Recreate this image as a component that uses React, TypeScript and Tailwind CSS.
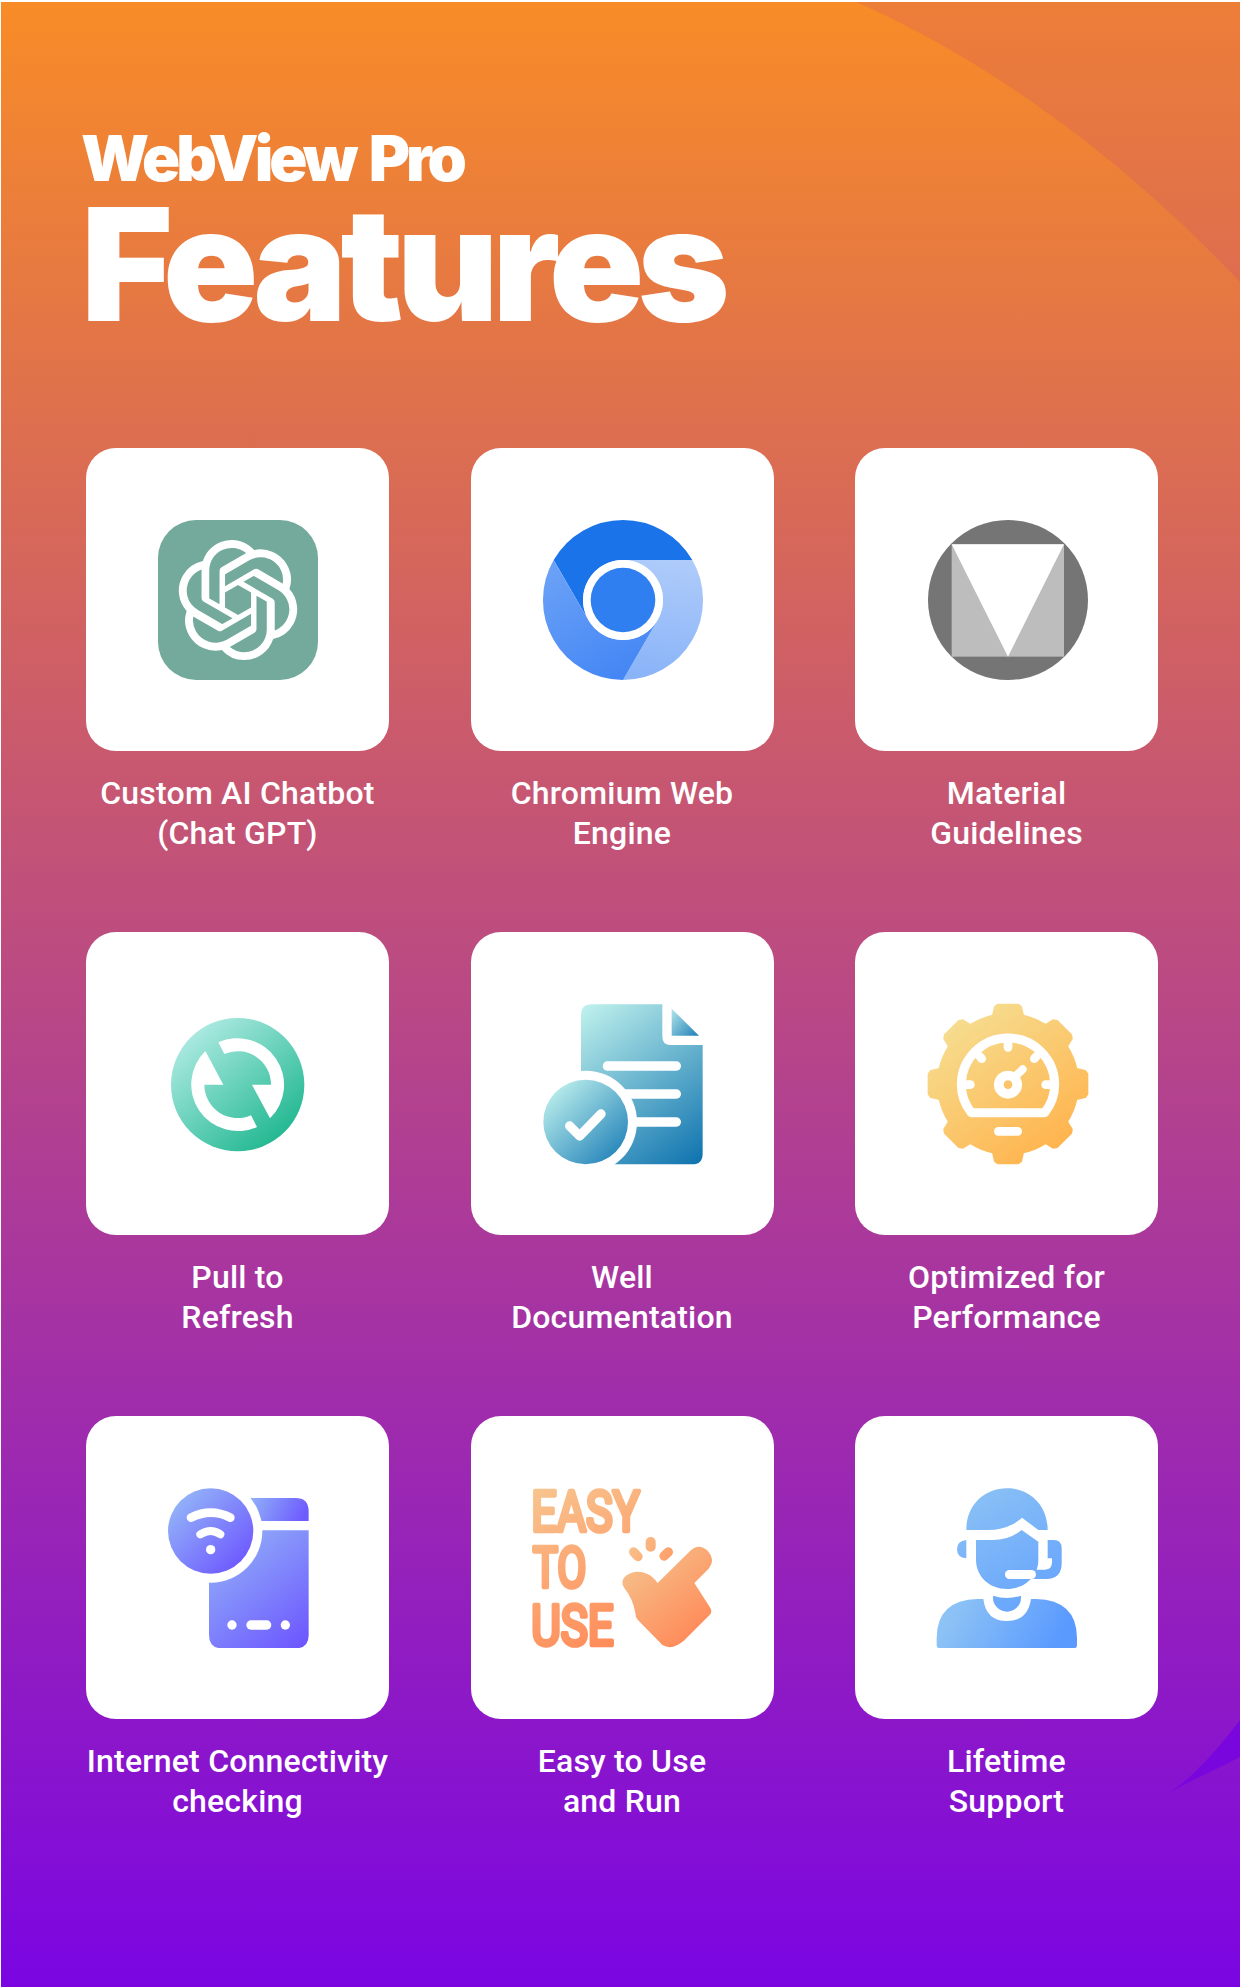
import { ReactNode } from "react";
import { SiOpenai } from "react-icons/si";

function Grad({ id, from, to, x1, y1, x2, y2 }: { id: string; from: string; to: string; x1: number; y1: number; x2: number; y2: number }) {
  return (
    <linearGradient id={id} gradientUnits="userSpaceOnUse" x1={x1} y1={y1} x2={x2} y2={y2}>
      <stop offset="0" stopColor={from} />
      <stop offset="1" stopColor={to} />
    </linearGradient>
  );
}

function ChatGptIcon() {
  return (
    <div className="flex h-[160px] w-[160px] items-center justify-center rounded-[38px] bg-[#74aa9c]">
      <SiOpenai className="h-[120px] w-[120px] text-white" />
    </div>
  );
}

function ChromiumIcon() {
  return (
    <svg className="overflow-visible" width="160" height="160" viewBox="231 90 480 480">
      <defs>
        <Grad id="cr-left" from="#6aa1f7" to="#4285f4" x1={300} y1={220} x2={500} y2={560} />
        <Grad id="cr-right" from="#aecbfa" to="#8ab4f8" x1={600} y1={210} x2={560} y2={560} />
      </defs>
      <path d="M266 210A240 240 0 0 1 682 210H474A120 120 0 0 0 370 390Z" fill="#1a73e8" />
      <path d="M682 210A240 240 0 0 1 474 570L578 390A120 120 0 0 0 474 210Z" fill="url(#cr-right)" />
      <path d="M474 570A240 240 0 0 1 266 210L370 390A120 120 0 0 0 578 390Z" fill="url(#cr-left)" />
      <circle cx="474" cy="330" r="120" fill="#fff" />
      <circle cx="474" cy="330" r="97" fill="#307ff0" />
    </svg>
  );
}

function MaterialIcon() {
  return (
    <svg className="overflow-visible" width="160" height="160" viewBox="80 90 480 480">
      <circle cx="323" cy="330" r="240" fill="#757575" />
      <rect x="154" y="163" width="337" height="337" fill="#bdbdbd" />
      <path d="M154 163H491L323 500Z" fill="#fff" />
    </svg>
  );
}

function RefreshIcon() {
  return (
    <svg width="160" height="160" viewBox="21 42 480 480">
      <defs>
        <Grad id="rf" from="#aeeae3" to="#1fb78f" x1={120} y1={120} x2={400} y2={450} />
      </defs>
      <circle cx="260" cy="284" r="200" fill="url(#rf)" />
      <path d="M202 157A140 140 0 0 1 357 385L303 284H360A100 100 0 0 0 220 192Z" fill="#fff" />
      <path d="M318 411A140 140 0 0 1 163 183L217 284H160A100 100 0 0 0 300 376Z" fill="#fff" />
    </svg>
  );
}

function DocIcon() {
  return (
    <svg className="overflow-visible" width="160" height="160" viewBox="63 42 480 480">
      <defs>
        <Grad id="doc" from="#bdf0ec" to="#0f73af" x1={190} y1={50} x2={540} y2={520} />
        <Grad id="doc-fold" from="#a9dfe6" to="#1f80b8" x1={450} y1={70} x2={530} y2={140} />
        <Grad id="doc-badge" from="#bdf0ec" to="#1f80b8" x1={90} y1={290} x2={300} y2={510} />
      </defs>
      <path d="M212 43H424V140Q424 165 449 165H545V491Q545 523 513 523H212Q180 523 180 491V75Q180 43 212 43Z" fill="url(#doc)" />
      <path d="M452 56L534 137H452Z" fill="url(#doc-fold)" />
      <g stroke="#fff" strokeWidth="28" strokeLinecap="round">
        <path d="M259 228H466" />
        <path d="M290 312H466" />
        <path d="M300 396H466" />
      </g>
      <circle cx="194" cy="396" r="154" fill="#fff" />
      <circle cx="194" cy="396" r="127" fill="url(#doc-badge)" />
      <path d="M146 408L176 438L240 372" fill="none" stroke="#fff" strokeWidth="28" strokeLinecap="round" strokeLinejoin="round" />
    </svg>
  );
}

// gear outline: 8 teeth around (291,282), rotated by hand so the gradient stays in one space
function gearPath() {
  const cx = 291;
  const cy = 282;
  const tooth: [number, number][] = [
    [-46, -206],
    [-40, -232],
    [-30, -239],
    [30, -239],
    [40, -232],
    [46, -206],
  ];
  let d = "";
  for (let i = 0; i < 8; i++) {
    const a = (i * Math.PI) / 4;
    const pts = tooth.map(([x, y]) => [
      (cx + x * Math.cos(a) - y * Math.sin(a)).toFixed(1),
      (cy + x * Math.sin(a) + y * Math.cos(a)).toFixed(1),
    ]);
    d += i === 0 ? `M${pts[0][0]} ${pts[0][1]}` : `A211 211 0 0 1 ${pts[0][0]} ${pts[0][1]}`;
    d += `L${pts[1][0]} ${pts[1][1]}L${pts[2][0]} ${pts[2][1]}`;
    d += `L${pts[3][0]} ${pts[3][1]}L${pts[4][0]} ${pts[4][1]}L${pts[5][0]} ${pts[5][1]}`;
  }
  return d + "A211 211 0 0 1 245 76Z";
}

function GaugeIcon() {
  return (
    <svg className="overflow-visible" width="160" height="160" viewBox="48 42 480 480">
      <defs>
        <Grad id="gauge" from="#f6dc8e" to="#ffb44e" x1={150} y1={90} x2={430} y2={480} />
      </defs>
      <path d={gearPath()} fill="url(#gauge)" stroke="url(#gauge)" strokeWidth="4" strokeLinejoin="round" />
      <path d="M181 368Q151 330 151 284A140 140 0 0 1 431 284Q431 330 401 368Z" fill="none" stroke="#fff" strokeWidth="27" strokeLinejoin="round" />
      <g stroke="#fff" strokeWidth="26" strokeLinecap="round">
        <path d="M291 158V172" />
        <path d="M205 198L212 206" />
        <path d="M377 198L370 206" />
        <path d="M165 284H178" />
        <path d="M417 284H404" />
        <path d="M262 424H320" />
        <path d="M308 264L335 238" strokeWidth="24" />
      </g>
      <circle cx="291" cy="284" r="42" fill="#fff" />
      <circle cx="291" cy="284" r="13" fill="#fcc56c" />
    </svg>
  );
}

function WifiPhoneIcon() {
  return (
    <svg width="160" height="160" viewBox="21 39 480 480">
      <defs>
        <Grad id="ph" from="#94b6f8" to="#6c55ff" x1={190} y1={170} x2={470} y2={510} />
        <Grad id="ph-top" from="#8fb0f8" to="#6f5cff" x1={300} y1={70} x2={450} y2={140} />
        <Grad id="ph-wifi" from="#94b6f8" to="#6c55ff" x1={70} y1={70} x2={280} y2={280} />
      </defs>
      <path d="M280 69H433Q473 69 473 109V138H280Z" fill="url(#ph-top)" />
      <path d="M174 166H473V480Q473 520 433 520H214Q174 520 174 480Z" fill="url(#ph)" />
      <circle cx="179" cy="168" r="155" fill="#fff" />
      <circle cx="179" cy="168" r="128" fill="url(#ph-wifi)" />
      <g fill="none" stroke="#fff" strokeLinecap="round">
        <path d="M120 128Q180 98 238 128" strokeWidth="26" />
        <path d="M148 178Q180 158 208 178" strokeWidth="24" />
      </g>
      <circle cx="179" cy="224" r="14" fill="#fff" />
      <circle cx="243" cy="450" r="14" fill="#fff" />
      <rect x="286" y="436" width="75" height="28" rx="14" fill="#fff" />
      <circle cx="403" cy="450" r="14" fill="#fff" />
    </svg>
  );
}

function EasyIcon() {
  const font = { fontFamily: "Roboto, sans-serif", fontWeight: 400, fontSize: 168, lengthAdjust: "spacingAndGlyphs" as const, stroke: "url(#ez-text)", strokeWidth: 14, strokeLinejoin: "round" as const, fill: "url(#ez-text)" };
  return (
    <svg className="overflow-visible" width="181" height="160" viewBox="48 40 543 480">
      <defs>
        <Grad id="ez-text" from="#f8c48e" to="#ff8a58" x1={60} y1={40} x2={300} y2={520} />
        <Grad id="ez-hand" from="#f6c08a" to="#ff8857" x1={340} y1={260} x2={540} y2={500} />
        <Grad id="ez-spark" from="#f8c48e" to="#ff9c68" x1={340} y1={190} x2={470} y2={260} />
      </defs>
      <text x="46" y="168" textLength="325" {...font}>EASY</text>
      <text x="50" y="338" textLength="161" {...font}>TO</text>
      <text x="46" y="511" textLength="247" {...font}>USE</text>
      <path
        d="M425 325L523 228Q548 205 575 228Q600 255 578 282L535 325L583 400Q590 412 580 422L505 497Q470 528 440 512L365 435Q358 428 358 415Q352 375 325 340Q310 318 330 303Q360 282 395 298Q410 305 425 325Z"
        fill="url(#ez-hand)"
      />
      <g stroke="url(#ez-spark)" strokeLinecap="round">
        <path d="M404 202V216" strokeWidth="30" />
        <path d="M353 232L366 246" strokeWidth="28" />
        <path d="M444 244L457 232" strokeWidth="28" />
      </g>
    </svg>
  );
}

function SupportIcon() {
  return (
    <svg width="160" height="160" viewBox="18 39 480 480">
      <defs>
        <Grad id="sp" from="#8cc2f5" to="#5a9aff" x1={120} y1={50} x2={420} y2={520} />
        <Grad id="sp-body" from="#8cc2f5" to="#5a9aff" x1={120} y1={370} x2={400} y2={520} />
      </defs>
      <g fill="url(#sp)">
        <path d="M136 165C136 90 190 40 258 40C326 40 380 90 380 165H352L303 128Q262 165 200 165Z" />
        <path d="M165 195H215Q265 195 302 165L352 200V255C352 305 310 342 258 342C206 342 165 305 165 255Z" />
        <path d="M136 195Q108 198 108 222Q108 248 136 250Z" />
        <path d="M380 195H398Q422 195 422 220V265Q422 312 375 312H325L345 284H372Q393 284 393 262V250H380Z" />
        <path d="M216 362Q258 376 300 362V368A42 42 0 0 1 216 368Z" />
      </g>
      <rect x="252" y="285" width="93" height="27" rx="13.5" fill="#fff" />
      <path
        d="M47 510V490Q47 375 170 372H187Q195 438 258 438Q320 438 330 372H345Q468 375 468 490V510Q468 520 458 520H57Q47 520 47 510Z"
        fill="url(#sp-body)"
      />
    </svg>
  );
}

const features: { icon: ReactNode; lines: string[] }[] = [
  { icon: <ChatGptIcon />, lines: ["Custom AI Chatbot", "(Chat GPT)"] },
  { icon: <ChromiumIcon />, lines: ["Chromium Web", "Engine"] },
  { icon: <MaterialIcon />, lines: ["Material", "Guidelines"] },
  { icon: <RefreshIcon />, lines: ["Pull to", "Refresh"] },
  { icon: <DocIcon />, lines: ["Well", "Documentation"] },
  { icon: <GaugeIcon />, lines: ["Optimized for", "Performance"] },
  { icon: <WifiPhoneIcon />, lines: ["Internet Connectivity", "checking"] },
  { icon: <EasyIcon />, lines: ["Easy to Use", "and Run"] },
  { icon: <SupportIcon />, lines: ["Lifetime", "Support"] },
];

function FeatureCard({ icon, lines }: { icon: ReactNode; lines: string[] }) {
  return (
    <div className="flex flex-col items-center">
      <div className="flex h-[303px] w-[303px] items-center justify-center rounded-[30px] bg-white">{icon}</div>
      <div className="mt-[22px] flex flex-col items-center whitespace-nowrap font-['Roboto',sans-serif] text-[32px] font-medium leading-[40px] tracking-[0.2px] text-white">
        {lines.map((line) => (
          <span key={line}>{line}</span>
        ))}
      </div>
    </div>
  );
}

export default function App() {
  return (
    <div className="w-[1240px] bg-white pl-px pt-[2px]">
      <div className="relative h-[1985px] w-[1239px] overflow-hidden bg-[linear-gradient(to_bottom,#f88c27,#7b05e2)]">
        <svg className="absolute left-0 top-0" width="1239" height="1985" viewBox="0 2 1239 1985">
          <path d="M855 2C960 48 1100 135 1239 282V2Z" fill="#a828a6" fillOpacity="0.14" />
          <path d="M1168 1793C1195 1775 1220 1745 1239 1720V1757C1215 1770 1190 1780 1168 1793Z" fill="#7a06de" />
        </svg>
        <div className="relative pl-[85px]">
          <div className="-ml-[5px] pt-[126px] font-['Inter',sans-serif] font-black text-white">
            <div className="text-[63px] leading-[60px] tracking-[-4px] [word-spacing:6px]">WebView Pro</div>
            <div className="mt-[16px] text-[157px] leading-[120px] tracking-[-6.5px]">Features</div>
          </div>
          <div className="mt-[124px] grid grid-cols-[303px_303px_303px] gap-x-[81.5px] gap-y-[79px]">
            {features.map((f) => (
              <FeatureCard key={f.lines[0]} icon={f.icon} lines={f.lines} />
            ))}
          </div>
        </div>
      </div>
    </div>
  );
}
